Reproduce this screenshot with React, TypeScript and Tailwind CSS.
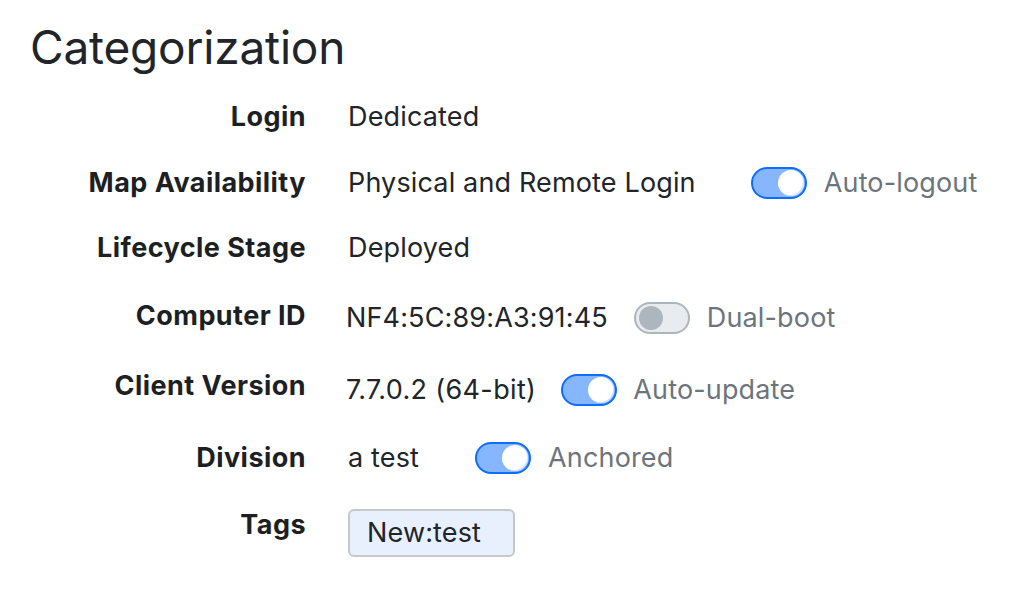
import React from "react";

function Toggle({ on }: { on: boolean }) {
  return on ? (
    <div className="flex h-[32px] w-[56px] shrink-0 items-center justify-end rounded-full border-2 border-[#0d6efd] bg-[#86b7fe] pr-[1px]">
      <div className="h-[26px] w-[26px] rounded-full bg-white shadow-[inset_-1px_-1px_0_#cfe0fb]" />
    </div>
  ) : (
    <div className="flex h-[32px] w-[56px] shrink-0 items-center justify-start rounded-full border-2 border-[#adb5bd] bg-[#e9ecef] pl-[3px]">
      <div className="h-[24px] w-[24px] rounded-full bg-[#adb5bd]" />
    </div>
  );
}

function Label({ children }: { children: React.ReactNode }) {
  return (
    <div className="w-[306px] shrink-0 text-right text-[27px] font-bold leading-[32px] tracking-[0.45px] text-[#1c1f23]">
      {children}
    </div>
  );
}

const val = "text-[27px] leading-[32px] tracking-[0.15px]";
const sub = "text-[27px] leading-[32px] tracking-[0.15px] text-[#6c757d]";

export default function App() {
  return (
    <div
      className="h-[590px] w-[1034px] bg-white text-[#212529]"
      style={{ fontFamily: "Inter, 'Noto Sans', sans-serif" }}
    >
      <h1 className="pl-[30px] pt-[20px] text-[46px] font-normal leading-[54px] tracking-[-0.2px]">
        Categorization
      </h1>
      <div className="flex flex-col">
        <div className="mt-[27px] flex h-[32px]">
          <Label>Login</Label>
          <div className={`ml-[42px] ${val}`}>Dedicated</div>
        </div>
        <div className="mt-[34px] flex h-[32px]">
          <Label>Map Availability</Label>
          <div className="ml-[42px] flex items-center">
            <span className={val}>Physical and Remote Login</span>
            <span className="ml-[55px]"><Toggle on /></span>
            <span className={`ml-[17px] ${sub}`}>Auto-logout</span>
          </div>
        </div>
        <div className="mt-[33px] flex h-[32px]">
          <Label>Lifecycle Stage</Label>
          <div className={`ml-[42px] ${val}`}>Deployed</div>
        </div>
        <div className="mt-[36px] flex h-[34px]">
          <Label>Computer ID</Label>
          <div className="ml-[40px] mt-[2px] flex items-center">
            <span className={`${val} tracking-[0.4px]`}>NF4:5C:89:A3:91:45</span>
            <span className="ml-[26px]"><Toggle on={false} /></span>
            <span className={`ml-[17px] ${sub}`}>Dual-boot</span>
          </div>
        </div>
        <div className="mt-[36px] flex h-[36px]">
          <Label>Client Version</Label>
          <div className="ml-[40px] mt-[4px] flex items-center">
            <span className={`${val} tracking-[0.35px]`}>7.7.0.2 (64-bit)</span>
            <span className="ml-[25px]"><Toggle on /></span>
            <span className={`ml-[16px] ${sub}`}>Auto-update</span>
          </div>
        </div>
        <div className="mt-[36px] flex h-[32px]">
          <Label>Division</Label>
          <div className="ml-[42px] flex items-center">
            <span className={val}>a test</span>
            <span className="ml-[56px]"><Toggle on /></span>
            <span className={`ml-[17px] ${sub}`}>Anchored</span>
          </div>
        </div>
        <div className="mt-[35px] flex">
          <Label>Tags</Label>
          <div className="ml-[42px]">
            <div className={`flex h-[48px] w-[167px] items-center rounded-[6px] border-2 border-[#c8c8c8] bg-[#e8f0fe] pl-[17px] ${val}`}>
              New:test
            </div>
          </div>
        </div>
      </div>
    </div>
  );
}
